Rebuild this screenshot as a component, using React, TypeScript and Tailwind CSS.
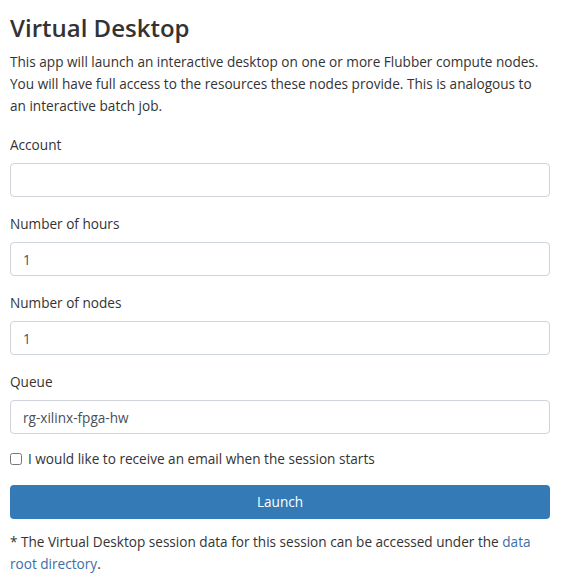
import React from 'react';

const fields = [
  { label: 'Account', value: '' },
  { label: 'Number of hours', value: '1' },
  { label: 'Number of nodes', value: '1' },
  { label: 'Queue', value: 'rg-xilinx-fpga-hw' },
];

export default function App() {
  return (
    <div
      className="min-h-screen bg-white px-[10px] pt-[11px] text-[13.6px] leading-[22px] text-[#333]"
      style={{ fontFamily: '"Open Sans", "Noto Sans", sans-serif' }}
    >
      <div className="w-[540px]">
        <h3 className="text-[24px] font-semibold leading-[34px] text-[#333]">Virtual Desktop</h3>
        <p className="mt-[6px] mb-[17px]">
          This app will launch an interactive desktop on one or more Flubber compute nodes. You will have full
          access to the resources these nodes provide. This is analogous to an interactive batch job.
        </p>

        {fields.map((f) => (
          <div key={f.label} className="mb-[16px]">
            <label className="mb-[7px] block">{f.label}</label>
            <input
              type="text"
              defaultValue={f.value}
              className="block h-[34px] w-full rounded-[4px] border border-[#ced4da] px-[12px] text-[13.6px] text-[#495057] outline-none"
            />
          </div>
        ))}

        <label className="-mt-[2px] mb-[15px] flex items-center gap-[6px]">
          <input type="checkbox" className="h-[12px] w-[12px]" />
          <span>I would like to receive an email when the session starts</span>
        </label>

        <button className="block h-[34px] w-full rounded-[4px] bg-[#337ab7] text-[13.6px] text-white">Launch</button>

        <p className="mt-[12px]">
          * The Virtual Desktop session data for this session can be accessed under the{' '}
          <a href="#" className="text-[#3a6ea8]">
            data root directory
          </a>
          .
        </p>
      </div>
    </div>
  );
}
